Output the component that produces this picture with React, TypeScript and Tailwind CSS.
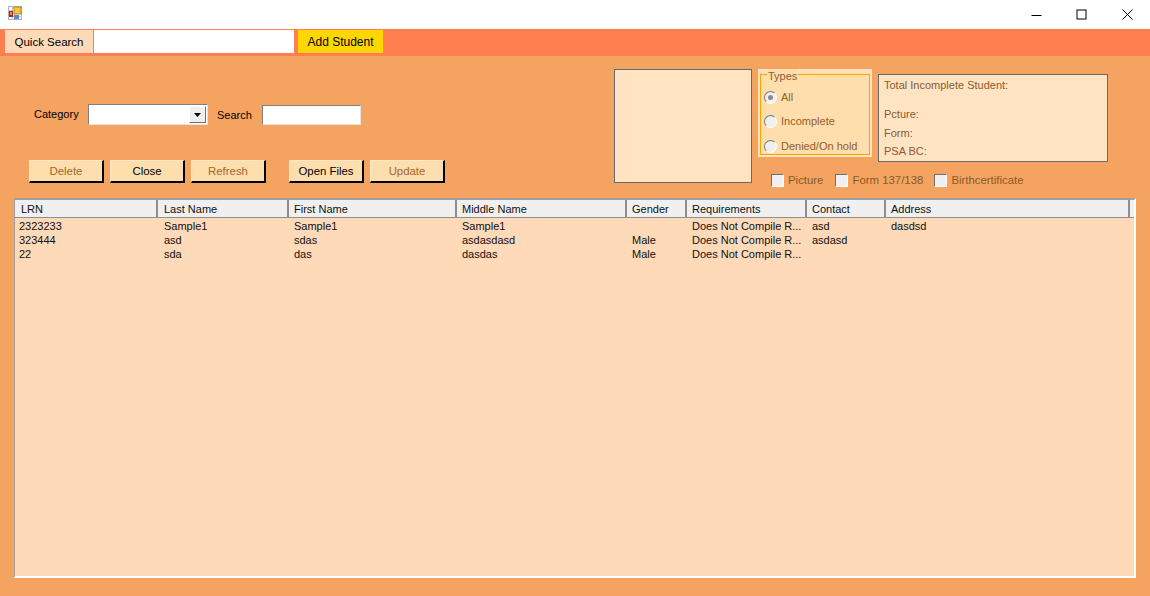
const columns = [
  { label: "LRN", width: "w-[143px]", head: "pl-[6px]", cell: "pl-[4px]" },
  { label: "Last Name", width: "w-[131px]", head: "pl-[6px]", cell: "pl-[6px]" },
  { label: "First Name", width: "w-[168px]", head: "pl-[5px]", cell: "pl-[5px]" },
  { label: "Middle Name", width: "w-[170px]", head: "pl-[5px]", cell: "pl-[5px]" },
  { label: "Gender", width: "w-[60px]", head: "pl-[5px]", cell: "pl-[5px]" },
  { label: "Requirements", width: "w-[120px]", head: "pl-[5px]", cell: "pl-[5px]" },
  { label: "Contact", width: "w-[79px]", head: "pl-[5px]", cell: "pl-[5px]" },
  { label: "Address", width: "w-[244px]", head: "pl-[5px]", cell: "pl-[5px]" },
];

const rows = [
  ["2323233", "Sample1", "Sample1", "Sample1", "", "Does Not Compile R...", "asd", "dasdsd"],
  ["323444", "asd", "sdas", "asdasdasd", "Male", "Does Not Compile R...", "asdasd", ""],
  ["22", "sda", "das", "dasdas", "Male", "Does Not Compile R...", "", ""],
];

function ActionButton({ label, disabled }: { label: string; disabled?: boolean }) {
  return (
    <button
      className={`w-[75px] h-[23px] text-[11.4px] bg-[#ffdead] border-b-2 border-r-2 border-b-black border-r-black border-t border-l border-t-[#ffe9c9] border-l-[#ffe9c9] ${
        disabled ? "text-[#a5652f]" : "text-black"
      }`}
    >
      {label}
    </button>
  );
}

function Radio({ label, checked, className }: { label: string; checked?: boolean; className?: string }) {
  return (
    <div className={`flex items-center gap-[4px] pl-[4px] h-[14px] ${className ?? ""}`}>
      <span className="w-[13px] h-[13px] rounded-full bg-[#f0f0f0] border border-t-[#777] border-l-[#777] border-b-white border-r-white flex items-center justify-center">
        {checked && <span className="w-[5px] h-[5px] rounded-full bg-[#8a8a8a]" />}
      </span>
      <span className="text-[#91602a]">{label}</span>
    </div>
  );
}

function Check({ label, className }: { label: string; className?: string }) {
  return (
    <div className={`flex items-center gap-[4px] text-[11.4px] ${className ?? ""}`}>
      <span className="w-[13px] h-[13px] bg-[#f0f0f0] border border-t-[#6f6f6f] border-l-[#6f6f6f] border-b-white border-r-white" />
      <span className="text-[#8b5a2b]">{label}</span>
    </div>
  );
}

export default function App() {
  return (
    <div className="w-[1150px] h-[596px] overflow-hidden flex flex-col bg-[#f4a460] text-[11px] leading-[14px] text-black font-['Liberation_Sans',Arial,sans-serif]">
      {/* Title bar */}
      <div className="h-[29px] bg-white flex items-center justify-between shrink-0">
        <svg className="ml-[8px] mb-[4px]" width="14" height="14" viewBox="0 0 14 14">
          <rect x="0.5" y="0.5" width="13" height="13" fill="#fff" stroke="#b0b0b0" />
          <path d="M0.5 4.5h13M0.5 10.5h13M4.5 0.5v13" stroke="#c8c8c8" />
          <rect x="1" y="5" width="4" height="6" fill="#b02418" />
          <rect x="2" y="6" width="2" height="3" fill="#e88a78" />
          <rect x="6" y="1" width="7" height="7" fill="#f6c93a" stroke="#b08a20" />
          <rect x="6" y="9" width="5" height="4" fill="#4f8ae0" />
        </svg>
        <div className="flex items-center">
          <svg className="mr-[34px]" width="11" height="11" viewBox="0 0 11 11">
            <path d="M0.5 6.5h10" stroke="#000" />
          </svg>
          <svg className="mr-[35px]" width="11" height="11" viewBox="0 0 11 11" fill="none">
            <rect x="1" y="1" width="9" height="9" stroke="#000" />
          </svg>
          <svg className="mr-[17px]" width="11" height="11" viewBox="0 0 11 11" fill="none">
            <path d="M0.5 0.5l10 10M10.5 0.5l-10 10" stroke="#000" />
          </svg>
        </div>
      </div>

      {/* Toolbar */}
      <div className="h-[27px] bg-[#ff7f50] flex items-center pl-[5px] shrink-0 pb-[2px] text-[12px]">
        <div className="w-[88px] h-[23px] bg-[#ffdab9] flex items-center justify-center text-[11.5px]">Quick Search</div>
        <div className="w-[200px] h-[23px] bg-white ml-[1px]" />
        <button className="w-[85px] h-[23px] bg-[#ffd700] ml-[4px]">Add Student</button>
      </div>

      {/* Filters */}
      <div className="h-[142px] shrink-0 flex">
        <div className="w-[614px] shrink-0 flex flex-col pl-[29px]">
          <div className="flex items-center mt-[48px] h-[21px]">
            <span className="ml-[5px] mb-[1px] w-[54px]">Category</span>
            <div className="w-[120px] h-[21px] bg-white border border-t-[#808080] border-l-[#808080] border-b-[#e3e3e3] border-r-[#e3e3e3] flex justify-end">
              <span className="w-[17px] h-[17px] mt-[1px] mr-[1px] bg-[#f0f0f0] border border-b-[#707070] border-r-[#707070] border-t-white border-l-white flex items-center justify-center">
                <svg width="7" height="4" viewBox="0 0 7 4">
                  <path d="M0 0h7L3.5 4z" fill="#000" />
                </svg>
              </span>
            </div>
            <span className="ml-[9px] w-[45px]">Search</span>
            <div className="w-[99px] h-[20px] bg-white border border-t-[#808080] border-l-[#808080] border-b-[#e3e3e3] border-r-[#e3e3e3]" />
          </div>
          <div className="flex mt-[35px] gap-[6px]">
            <ActionButton label="Delete" disabled />
            <ActionButton label="Close" />
            <ActionButton label="Refresh" disabled />
            <div className="ml-[17px] flex gap-[6px]">
              <ActionButton label="Open Files" />
              <ActionButton label="Update" disabled />
            </div>
          </div>
        </div>

        <div className="w-[138px] h-[114px] mt-[13px] bg-[#ffe4c4] border border-[#696969] shrink-0" />

        <div className="ml-[6px] shrink-0 flex flex-col">
          <div className="flex">
            {/* Types group */}
            <div className="w-[114px] h-[88px] mt-[13px] bg-[#ffdead] border-[2px] border-[#ffe4c4] relative">
              <div className="absolute inset-x-0 top-[3px] bottom-0 border border-[#ffa500]" />
              <span className="absolute left-[7px] top-[-2px] px-[1px] bg-[#ffdead] text-[#8b5a2b]">Types</span>
              <div className="relative pt-[19px]">
                <Radio label="All" checked />
                <Radio label="Incomplete" className="mt-[10px]" />
                <Radio label="Denied/On hold" className="mt-[11px]" />
              </div>
            </div>
            {/* Totals */}
            <div className="ml-[6px] w-[230px] h-[88px] mt-[18px] bg-[#ffe4c4] border border-[#696969] pl-[5px] text-[#8b5a2b] flex flex-col">
              <span className="mt-[3px]">Total Incomplete Student:</span>
              <span className="mt-[15px]">Pcture:</span>
              <span className="mt-[5px]">Form:</span>
              <span className="mt-[4px]">PSA BC:</span>
            </div>
          </div>
          <div className="flex mt-[11px] pl-[13px]">
            <Check label="Picture" />
            <Check label="Form 137/138" className="ml-[12px]" />
            <Check label="Birthcertificate" className="ml-[11px]" />
          </div>
        </div>
      </div>

      {/* Student list */}
      <div className="ml-[14px] w-[1122px] h-[380px] bg-[#ffdab9] border border-t-2 border-t-[#a0a0a0] border-l-[#a0a0a0] border-b-2 border-r-2 border-b-white border-r-white shrink-0 overflow-hidden">
        <div className="flex h-[18px] bg-[#f0f0f0] border-b border-b-[#8e8e8e]">
          {columns.map((col) => (
            <div
              key={col.label}
              className={`${col.width} ${col.head} shrink-0 pt-[2px] border-r-2 border-r-[#8e8e8e] text-[#111]`}
            >
              {col.label}
            </div>
          ))}
        </div>
        <div className="pt-[1px]">
          {rows.map((row) => (
            <div key={row[0]} className="flex h-[14px] text-[#111]">
              {row.map((value, i) => (
                <div key={i} className={`${columns[i].width} ${columns[i].cell} shrink-0 whitespace-nowrap`}>
                  {value}
                </div>
              ))}
            </div>
          ))}
        </div>
      </div>
    </div>
  );
}
